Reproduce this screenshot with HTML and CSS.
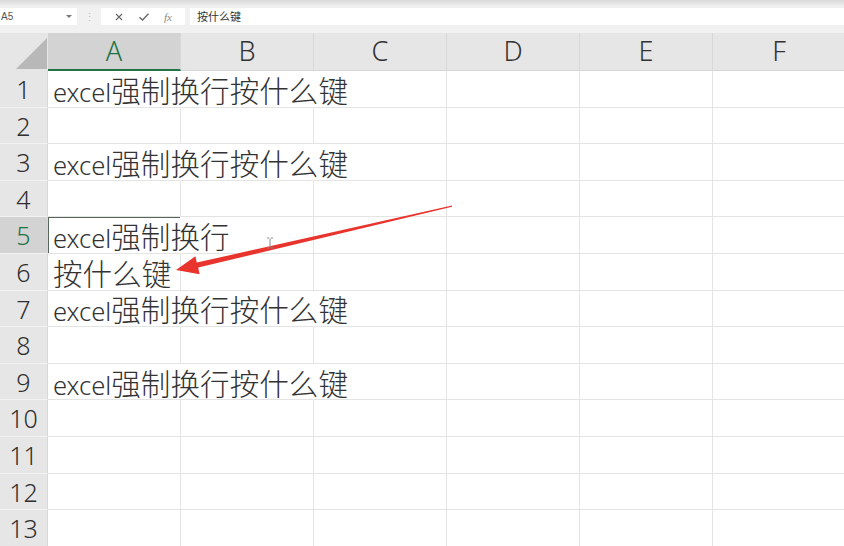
FILE: index.html
```html
<!DOCTYPE html>
<html lang="zh">
<head>
<meta charset="utf-8">
<title>excel</title>
<link rel="stylesheet" href="styles.css">
</head>
<body>
<div class="app">
  <div class="topbar">
    <div class="namebox"><span class="ref">A5</span><span class="dd"></span></div>
    <div class="sep">⋮</div>
    <div class="btns">
      <svg class="ico" viewBox="0 0 10 10" width="10" height="10"><path d="M2 2L8 8M8 2L2 8" stroke="#666" stroke-width="1.1" fill="none"/></svg>
      <svg class="ico" viewBox="0 0 12 10" width="12" height="10"><path d="M1.5 5.2L4.5 8L10.5 1.8" stroke="#666" stroke-width="1.3" fill="none"/></svg>
      <span class="fx">fx</span>
    </div>
    <div class="formula">按什么键</div>
  </div>

  <div class="colhead">
    <div class="corner"><svg viewBox="0 0 48 38" width="48" height="38"><polygon points="16,36 47,36 47,5" fill="#b8b8b8"/></svg></div>
    <div class="ch ch-sel">A</div>
    <div class="ch">B</div>
    <div class="ch">C</div>
    <div class="ch">D</div>
    <div class="ch">E</div>
    <div class="ch">F</div>
  </div>

  <div class="sheet">
    <div class="row"><div class="rh">1</div><div class="c c-open"><span class="txt">excel<span class="cjk">强制换行按什么键</span></span></div><div class="c c-open"></div><div class="c"></div><div class="c"></div><div class="c"></div><div class="c"></div></div>
    <div class="row"><div class="rh">2</div><div class="c"></div><div class="c"></div><div class="c"></div><div class="c"></div><div class="c"></div><div class="c"></div></div>
    <div class="row"><div class="rh">3</div><div class="c c-open"><span class="txt">excel<span class="cjk">强制换行按什么键</span></span></div><div class="c c-open"></div><div class="c"></div><div class="c"></div><div class="c"></div><div class="c"></div></div>
    <div class="row"><div class="rh">4</div><div class="c"></div><div class="c"></div><div class="c"></div><div class="c"></div><div class="c"></div><div class="c"></div></div>
    <div class="row"><div class="rh rh-sel">5</div><div class="c c-open c-sel"><span class="txt">excel<span class="cjk">强制换行</span></span></div><div class="c"></div><div class="c"></div><div class="c"></div><div class="c"></div><div class="c"></div></div>
    <div class="row"><div class="rh">6</div><div class="c"><span class="txt"><span class="cjk">按什么键</span></span></div><div class="c"></div><div class="c"></div><div class="c"></div><div class="c"></div><div class="c"></div></div>
    <div class="row"><div class="rh">7</div><div class="c c-open"><span class="txt">excel<span class="cjk">强制换行按什么键</span></span></div><div class="c c-open"></div><div class="c"></div><div class="c"></div><div class="c"></div><div class="c"></div></div>
    <div class="row"><div class="rh">8</div><div class="c"></div><div class="c"></div><div class="c"></div><div class="c"></div><div class="c"></div><div class="c"></div></div>
    <div class="row"><div class="rh">9</div><div class="c c-open"><span class="txt">excel<span class="cjk">强制换行按什么键</span></span></div><div class="c c-open"></div><div class="c"></div><div class="c"></div><div class="c"></div><div class="c"></div></div>
    <div class="row"><div class="rh">10</div><div class="c"></div><div class="c"></div><div class="c"></div><div class="c"></div><div class="c"></div><div class="c"></div></div>
    <div class="row"><div class="rh">11</div><div class="c"></div><div class="c"></div><div class="c"></div><div class="c"></div><div class="c"></div><div class="c"></div></div>
    <div class="row"><div class="rh">12</div><div class="c"></div><div class="c"></div><div class="c"></div><div class="c"></div><div class="c"></div><div class="c"></div></div>
    <div class="row"><div class="rh">13</div><div class="c"></div><div class="c"></div><div class="c"></div><div class="c"></div><div class="c"></div><div class="c"></div></div>
  </div>

  <svg class="arrow" viewBox="0 0 844 546" width="844" height="546">
    <polygon points="176,270 195.4,256.2 196.8,262.6 452,205.4 452,206.8 198.2,267.6 199.6,274.2" fill="#e8342d"/>
  </svg>
  <svg class="cursor" viewBox="0 0 8 12" width="8" height="12">
    <path d="M1 1H3.2M4.8 1H7M4 1.6V10.4M1 11H3.2M4.8 11H7" stroke="#8a8a8a" stroke-width="1" fill="none"/>
  </svg>
</div>
</body>
</html>
```

FILE: styles.css
```css
* { box-sizing: border-box; }
html, body { margin: 0; padding: 0; }
body {
  width: 844px;
  height: 546px;
  overflow: hidden;
  background: #ffffff;
  font-family: "Noto Sans", "Noto Sans CJK SC", sans-serif;
}
.app {
  position: relative;
  width: 844px;
  height: 546px;
  overflow: hidden;
}

/* formula bar */
.topbar {
  height: 33px;
  display: flex;
  align-items: flex-start;
  padding-top: 8px;
  background: linear-gradient(#d9d9d9 0, #eeeeee 6px, #f1f1f1 8px, #f1f1f1 100%);
}
.namebox {
  width: 77px;
  height: 17px;
  background: #fff;
  display: flex;
  align-items: center;
  justify-content: space-between;
  padding: 0 5px 0 1px;
}
.ref {
  font-family: "Liberation Sans", sans-serif;
  font-size: 10px;
  color: #555;
}
.dd {
  width: 0;
  height: 0;
  border-left: 3px solid transparent;
  border-right: 3px solid transparent;
  border-top: 3px solid #777;
}
.sep {
  width: 24px;
  height: 17px;
  text-align: center;
  font-size: 11px;
  line-height: 17px;
  color: #bdbdbd;
}
.btns {
  width: 84px;
  height: 17px;
  background: #fff;
  display: flex;
  align-items: center;
  justify-content: space-around;
  padding: 0 6px 0 6px;
}
.fx {
  font-family: "Liberation Serif", serif;
  font-style: italic;
  font-size: 11px;
  color: #888;
}
.formula {
  flex: 1;
  height: 17px;
  margin-left: 5px;
  background: #fff;
  padding-left: 7px;
  font-family: "Noto Sans CJK SC", sans-serif;
  font-size: 11px;
  line-height: 17px;
  color: #333;
}

/* column header */
.colhead {
  height: 38px;
  display: grid;
  grid-template-columns: 48px repeat(6, 133px);
  background: #e6e6e6;
  border-bottom: 1px solid #d6d6d6;
}
.corner {
  background: #e6e6e6;
  line-height: 0;
}
.ch {
  font-family: "Noto Sans", sans-serif;
  font-weight: 300;
  font-size: 27px;
  line-height: 36px;
  color: #333;
  text-align: center;
  border-right: 1px solid #d8d8d8;
}
.ch-sel {
  background: #d3d3d3;
  color: #217346;
  border-bottom: 2px solid #217346;
  line-height: 36px;
}

/* grid rows */
.sheet {
  display: flex;
  flex-direction: column;
}
.row {
  height: 36.6px;
  flex: 0 0 36.6px;
  display: grid;
  grid-template-columns: 48px repeat(6, 133px);
  grid-template-rows: 36.6px;
}
.rh {
  background: #e6e6e6;
  border-bottom: 1px solid #f2f2f2;
  border-right: 1px solid #d8d8d8;
  font-family: "Noto Sans", sans-serif;
  font-weight: 300;
  font-size: 25px;
  line-height: 36px;
  text-align: center;
  color: #2e2e2e;
  overflow: hidden;
}
.rh-sel {
  background: #d3d3d3;
  color: #217346;
}
.c {
  position: relative;
  border-right: 1px solid #e4e4e4;
  border-bottom: 1px solid #e4e4e4;
  overflow: visible;
  white-space: nowrap;
  display: flex;
  align-items: center;
  padding-left: 5px;
  min-height: 0;
}
.c-open { border-right-color: transparent; }
.c-sel { box-shadow: inset 1px 1px 0 #56665b; }
.txt {
  position: relative;
  z-index: 1;
  font-family: "Noto Sans", sans-serif;
  font-weight: 300;
  font-size: 25.6px;
  line-height: 27px;
  height: 27px;
  color: #333;
  margin-top: 1px;
}
.cjk {
  font-family: "Noto Sans CJK SC", sans-serif;
  font-weight: 300;
  font-size: 29.6px;
  line-height: 27px;
  letter-spacing: 0;
}

/* overlays */
.arrow {
  position: absolute;
  left: 0;
  top: 0;
  z-index: 5;
  pointer-events: none;
}
.cursor {
  position: absolute;
  left: 266px;
  top: 237px;
  z-index: 6;
}
```
